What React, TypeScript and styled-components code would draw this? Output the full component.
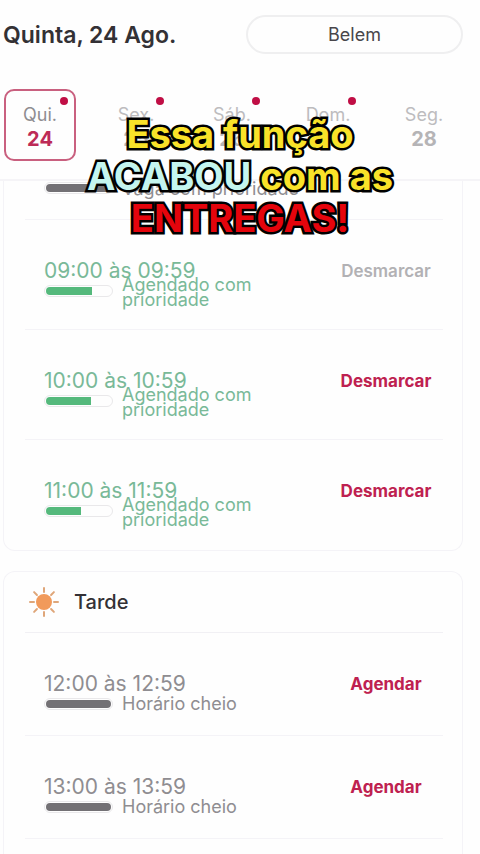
import React from "react";
import styled, { createGlobalStyle } from "styled-components";

const GlobalStyle = createGlobalStyle`
  *, *::before, *::after { box-sizing: border-box; }
  body {
    margin: 0;
    background: #fefefe;
    font-family: Inter, "Open Sans", sans-serif;
    color: #333135;
  }
  button { font-family: inherit; border: 0; background: none; padding: 0; cursor: pointer; }
`;

const Page = styled.main`
  position: relative;
  min-height: 100vh;
  display: flex;
  flex-direction: column;
  overflow: hidden;
`;

const Header = styled.header`
  height: 181px;
  border-bottom: 2px solid #f5f4f7;
`;

const TitleBar = styled.div`
  display: flex;
  align-items: center;
  justify-content: space-between;
  padding: 15px 17px 0 3px;
`;

const Title = styled.h1`
  margin: 0;
  font-size: 23px;
  line-height: 28px;
  font-weight: 600;
`;

const CityButton = styled.button`
  width: 217px;
  height: 39px;
  border: 2px solid #efeff0;
  border-radius: 20px;
  background: #fefefe;
  color: #48464a;
  font-size: 18px;
  line-height: 24px;
`;

const Days = styled.nav`
  display: grid;
  grid-template-columns: repeat(5, 1fr);
  gap: 24px;
  padding: 35px 20px 0 4px;
`;

const DayButton = styled.button<{ $active?: boolean }>`
  position: relative;
  display: flex;
  flex-direction: column;
  align-items: center;
  height: 72px;
  padding-top: 12px;
  border: 2px solid ${(p) => (p.$active ? "#c9607f" : "transparent")};
  border-radius: 10px;
  color: ${(p) => (p.$active ? "#8f8d91" : "#bdbcbe")};
`;

const DayName = styled.span`
  font-size: 18px;
  line-height: 24px;
`;

const DayNumber = styled.span<{ $active?: boolean }>`
  font-size: 20px;
  line-height: 24px;
  font-weight: 700;
  color: ${(p) => (p.$active ? "#bd2b57" : "#b5b4b6")};
`;

const Dot = styled.i`
  position: absolute;
  top: 6px;
  right: 6px;
  width: 8px;
  height: 8px;
  border-radius: 50%;
  background: #c00e45;
`;

const Card = styled.section<{ $scrolled?: boolean; $last?: boolean }>`
  margin: 0 17px ${(p) => (p.$last ? "0" : "20px")} 3px;
  padding: 0 19px 0 21px;
  border: 1px solid #f4f3f7;
  border-width: ${(p) => (p.$scrolled ? "0 1px 1px" : p.$last ? "1px 1px 0" : "1px")};
  border-radius: ${(p) => (p.$scrolled ? "0 0 12px 12px" : p.$last ? "12px 12px 0 0" : "12px")};
  flex-grow: ${(p) => (p.$last ? 1 : 0)};
`;

const CardHeader = styled.div`
  display: flex;
  align-items: center;
  gap: 14px;
  height: 61px;
  padding-left: 3px;
  border-bottom: 1px solid #f1f0f4;
`;

const CardTitle = styled.h2`
  margin: 0;
  font-size: 20px;
  line-height: 24px;
  font-weight: 500;
`;

const Row = styled.div<{ $size: "tall" | "short" | "cut"; $last?: boolean }>`
  display: flex;
  justify-content: space-between;
  height: ${(p) => ({ tall: "110px", short: "103px", cut: "39px" })[p.$size]};
  padding: ${(p) => (p.$size === "cut" ? "0" : "39px")} 0 0 19px;
  border-bottom: ${(p) => (p.$last ? "0" : "1px solid #f4f3f7")};
`;

const Slot = styled.div<{ $tone: "green" | "gray" }>`
  color: ${(p) => (p.$tone === "green" ? "#79b998" : "#8f8d91")};
`;

const Time = styled.div`
  font-size: 21px;
  line-height: 24px;
`;

const StatusLine = styled.div<{ $overlap?: boolean }>`
  display: flex;
  gap: 9px;
  margin-top: ${(p) => (p.$overlap ? "-6px" : "0")};
`;

const Meter = styled.div<{ $offset: number }>`
  flex: none;
  width: 69px;
  height: 12px;
  margin-top: ${(p) => p.$offset}px;
  padding: 2px;
  border-radius: 6px;
  background: #fefefe;
  border: 1px solid #e9e8ea;
  overflow: hidden;
`;

const Fill = styled.div<{ $tone: "green" | "gray" }>`
  height: 100%;
  border-radius: ${(p) => (p.$tone === "green" ? "4px 0 0 4px" : "4px")};
  background: ${(p) => (p.$tone === "green" ? "#55b97c" : "#737175")};
  box-shadow: 0 0 0 1px ${(p) => (p.$tone === "green" ? "#55b97c" : "#737175")};
`;

const Status = styled.div<{ $narrow?: boolean }>`
  max-width: ${(p) => (p.$narrow ? "150px" : "none")};
  font-size: 18px;
  line-height: 15px;
`;

const Action = styled.button<{ $tone: "red" | "muted" }>`
  width: 114px;
  height: 24px;
  font-size: 17px;
  line-height: 24px;
  font-weight: ${(p) => (p.$tone === "red" ? 700 : 600)};
  color: ${(p) => (p.$tone === "red" ? "#be2150" : "#b2b1b4")};
`;

const Caption = styled.p`
  position: absolute;
  top: 113px;
  left: 0;
  right: 0;
  margin: 0;
  text-align: center;
  font-size: 38px;
  line-height: 42px;
  font-weight: 700;
  color: #f9e229;
  -webkit-text-stroke: 5px #000;
  paint-order: stroke fill;
  stroke-linejoin: round;
  pointer-events: none;
`;

const Line = styled.span`
  display: block;
`;

const Tint = styled.span<{ $color: string }>`
  color: ${(p) => p.$color};
`;

const days = [
  { name: "Qui.", number: 24, dot: true },
  { name: "Sex.", number: 25, dot: true },
  { name: "Sáb.", number: 26, dot: true },
  { name: "Dom.", number: 27, dot: true },
  { name: "Seg.", number: 28, dot: false },
];

const morning = [
  { time: "09:00 às 09:59", fill: 70, tone: "muted" as const },
  { time: "10:00 às 10:59", fill: 68, tone: "red" as const },
  { time: "11:00 às 11:59", fill: 52, tone: "red" as const },
];

const afternoon = ["12:00 às 12:59", "13:00 às 13:59"];

function Sun() {
  return (
    <svg width="32" height="32" viewBox="0 0 32 32" aria-hidden="true">
      <g stroke="#dfa679" strokeWidth="2" strokeLinecap="round">
        {[0, 45, 90, 135, 180, 225, 270, 315].map((angle) => (
          <path key={angle} d="M16 2v4" transform={`rotate(${angle} 16 16)`} />
        ))}
      </g>
      <circle cx="16" cy="16" r="8" fill="#f19a5b" />
    </svg>
  );
}

export default function App() {
  return (
    <>
      <GlobalStyle />
      <Page>
        <Header>
          <TitleBar>
            <Title>Quinta, 24 Ago.</Title>
            <CityButton>Belem</CityButton>
          </TitleBar>
          <Days>
            {days.map((day, i) => (
              <DayButton key={day.name} $active={i === 0}>
                <DayName>{day.name}</DayName>
                <DayNumber $active={i === 0}>{day.number}</DayNumber>
                {day.dot && <Dot />}
              </DayButton>
            ))}
          </Days>
        </Header>

        <Card $scrolled>
          <Row $size="cut">
            <Slot $tone="gray">
              <StatusLine>
                <Meter $offset={1}>
                  <Fill $tone="gray" />
                </Meter>
                <Status>Vaga com prioridade</Status>
              </StatusLine>
            </Slot>
          </Row>
          {morning.map((slot, i) => (
            <Row key={slot.time} $size="tall" $last={i === morning.length - 1}>
              <Slot $tone="green">
                <Time>{slot.time}</Time>
                <StatusLine $overlap>
                  <Meter $offset={8}>
                    <Fill $tone="green" style={{ width: `${slot.fill}%` }} />
                  </Meter>
                  <Status $narrow>Agendado com prioridade</Status>
                </StatusLine>
              </Slot>
              <Action $tone={slot.tone}>Desmarcar</Action>
            </Row>
          ))}
        </Card>

        <Card $last>
          <CardHeader>
            <Sun />
            <CardTitle>Tarde</CardTitle>
          </CardHeader>
          {afternoon.map((time) => (
            <Row key={time} $size="short">
              <Slot $tone="gray">
                <Time>{time}</Time>
                <StatusLine>
                  <Meter $offset={2}>
                    <Fill $tone="gray" />
                  </Meter>
                  <Status>Horário cheio</Status>
                </StatusLine>
              </Slot>
              <Action $tone="red">Agendar</Action>
            </Row>
          ))}
        </Card>

        <Caption>
          <Line>Essa função</Line>
          <Line>
            <Tint $color="#c4f5ef">ACABOU</Tint> com as
          </Line>
          <Line>
            <Tint $color="#e5040c">ENTREGAS!</Tint>
          </Line>
        </Caption>
      </Page>
    </>
  );
}
